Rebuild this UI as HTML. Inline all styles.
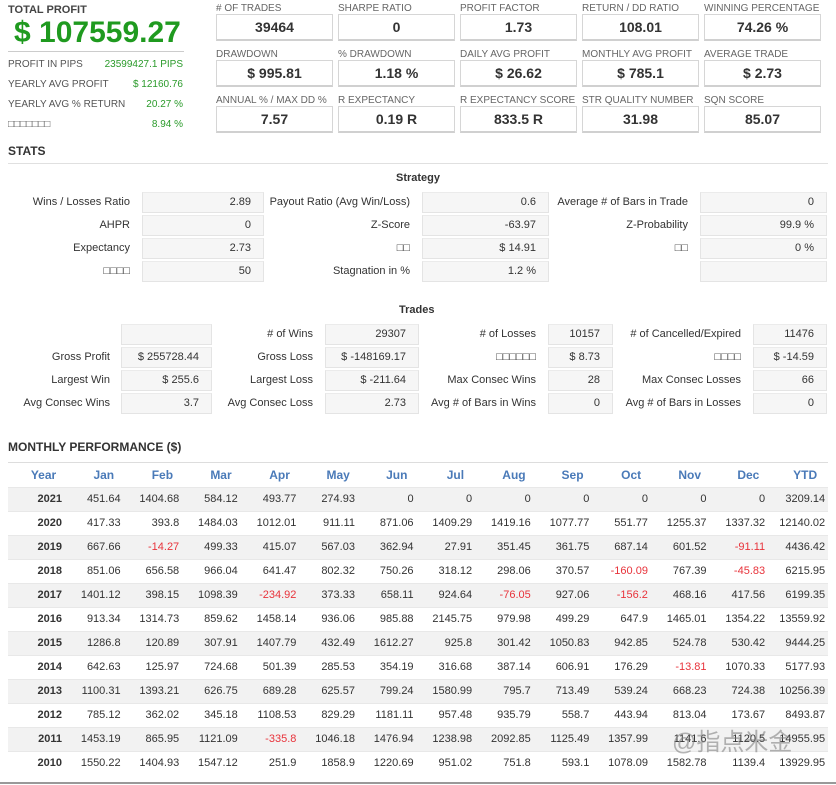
<!DOCTYPE html>
<html><head><meta charset="utf-8"><style>
*{margin:0;padding:0;box-sizing:border-box}
body{width:836px;height:785px;background:#fff;font-family:"Liberation Sans","Noto Sans CJK SC",sans-serif;color:#333;position:relative;overflow:hidden}
.a{position:absolute;white-space:nowrap}
.lbl{font-size:10px;color:#666}
.box{position:absolute;width:117px;height:27px;border:1px solid #d6d6d6;border-bottom:2px solid #d0d0d0;text-align:center;font-weight:bold;font-size:14px;line-height:25px;color:#333}
.sl{position:absolute;font-size:11px;text-align:right;white-space:nowrap;line-height:20px}
.sb{position:absolute;height:21px;background:#f6f6f6;border:1px solid #e4e4e4;border-top-color:#ebebeb;font-size:11px;text-align:right;padding-right:12px;line-height:19px}
.g{color:#2a9a2a}
table{position:absolute;left:8px;top:463px;border-collapse:collapse;table-layout:fixed;width:820px;font-size:11px}
th{color:#4a7ab8;font-weight:bold;font-size:12px;height:24px;text-align:center;padding-left:9px}
td{height:24px;text-align:right;padding-right:8px;border-top:1px solid #e8e8e8}
td:first-child{font-weight:bold}
td:last-child{padding-right:3px}
tbody tr:nth-child(odd){background:#f2f2f2}
.r{color:#e8333b}
</style></head><body>
<div class="a" style="left:8px;top:4px;font-size:11px;font-weight:bold;color:#444">TOTAL PROFIT</div>
<div class="a" style="left:14px;top:16px;font-size:30px;font-weight:bold;color:#1f9a1f">$ 107559.27</div>
<div class="a" style="left:8px;top:51px;width:176px;border-top:1px solid #ccc"></div>
<div class="a" style="left:8px;top:59px;font-size:10px;color:#555">PROFIT IN PIPS</div><div class="a g" style="right:653px;top:59px;font-size:10px">23599427.1 PIPS</div>
<div class="a" style="left:8px;top:79px;font-size:10px;color:#555">YEARLY AVG PROFIT</div><div class="a g" style="right:653px;top:79px;font-size:10px">$ 12160.76</div>
<div class="a" style="left:8px;top:99px;font-size:10px;color:#555">YEARLY AVG % RETURN</div><div class="a g" style="right:653px;top:99px;font-size:10px">20.27 %</div>
<div class="a" style="left:8px;top:119px;font-size:10px;color:#555">□□□□□□□</div><div class="a g" style="right:653px;top:119px;font-size:10px">8.94 %</div>

<div class="a lbl" style="left:216px;top:3px">#&nbsp;OF TRADES</div><div class="box" style="left:216px;top:14px">39464</div>
<div class="a lbl" style="left:338px;top:3px">SHARPE RATIO</div><div class="box" style="left:338px;top:14px">0</div>
<div class="a lbl" style="left:460px;top:3px">PROFIT FACTOR</div><div class="box" style="left:460px;top:14px">1.73</div>
<div class="a lbl" style="left:582px;top:3px">RETURN / DD RATIO</div><div class="box" style="left:582px;top:14px">108.01</div>
<div class="a lbl" style="left:704px;top:3px">WINNING PERCENTAGE</div><div class="box" style="left:704px;top:14px">74.26 %</div>
<div class="a lbl" style="left:216px;top:49px">DRAWDOWN</div><div class="box" style="left:216px;top:60px">$ 995.81</div>
<div class="a lbl" style="left:338px;top:49px">% DRAWDOWN</div><div class="box" style="left:338px;top:60px">1.18 %</div>
<div class="a lbl" style="left:460px;top:49px">DAILY AVG PROFIT</div><div class="box" style="left:460px;top:60px">$ 26.62</div>
<div class="a lbl" style="left:582px;top:49px">MONTHLY AVG PROFIT</div><div class="box" style="left:582px;top:60px">$ 785.1</div>
<div class="a lbl" style="left:704px;top:49px">AVERAGE TRADE</div><div class="box" style="left:704px;top:60px">$ 2.73</div>
<div class="a lbl" style="left:216px;top:95px">ANNUAL % / MAX DD %</div><div class="box" style="left:216px;top:106px">7.57</div>
<div class="a lbl" style="left:338px;top:95px">R EXPECTANCY</div><div class="box" style="left:338px;top:106px">0.19 R</div>
<div class="a lbl" style="left:460px;top:95px">R EXPECTANCY SCORE</div><div class="box" style="left:460px;top:106px">833.5 R</div>
<div class="a lbl" style="left:582px;top:95px">STR QUALITY NUMBER</div><div class="box" style="left:582px;top:106px">31.98</div>
<div class="a lbl" style="left:704px;top:95px">SQN SCORE</div><div class="box" style="left:704px;top:106px">85.07</div>

<div class="a" style="left:8px;top:144px;font-size:12px;font-weight:bold;color:#333">STATS</div>
<div class="a" style="left:8px;top:163px;width:820px;border-top:1px solid #e0e0e0"></div>
<div class="a" style="left:396px;top:172px;font-size:11px;font-weight:bold">Strategy</div>

<div class="sl" style="right:706px;top:192px">Wins / Losses Ratio</div><div class="sb" style="left:142px;top:192px;width:122px">2.89</div>
<div class="sl" style="right:426px;top:192px">Payout Ratio (Avg Win/Loss)</div><div class="sb" style="left:422px;top:192px;width:127px">0.6</div>
<div class="sl" style="right:148px;top:192px">Average # of Bars in Trade</div><div class="sb" style="left:700px;top:192px;width:127px">0</div>
<div class="sl" style="right:706px;top:215px">AHPR</div><div class="sb" style="left:142px;top:215px;width:122px">0</div>
<div class="sl" style="right:426px;top:215px">Z-Score</div><div class="sb" style="left:422px;top:215px;width:127px">-63.97</div>
<div class="sl" style="right:148px;top:215px">Z-Probability</div><div class="sb" style="left:700px;top:215px;width:127px">99.9 %</div>
<div class="sl" style="right:706px;top:238px">Expectancy</div><div class="sb" style="left:142px;top:238px;width:122px">2.73</div>
<div class="sl" style="right:426px;top:238px">□□</div><div class="sb" style="left:422px;top:238px;width:127px">$ 14.91</div>
<div class="sl" style="right:148px;top:238px">□□</div><div class="sb" style="left:700px;top:238px;width:127px">0 %</div>
<div class="sl" style="right:706px;top:261px">□□□□</div><div class="sb" style="left:142px;top:261px;width:122px">50</div>
<div class="sl" style="right:426px;top:261px">Stagnation in %</div><div class="sb" style="left:422px;top:261px;width:127px">1.2 %</div>
<div class="sb" style="left:700px;top:261px;width:127px"></div>

<div class="a" style="left:399px;top:304px;font-size:11px;font-weight:bold">Trades</div>
<div class="sb" style="left:121px;top:324px;width:91px"></div>
<div class="sl" style="right:523px;top:324px"># of Wins</div><div class="sb" style="left:325px;top:324px;width:94px">29307</div>
<div class="sl" style="right:300px;top:324px"># of Losses</div><div class="sb" style="left:548px;top:324px;width:65px">10157</div>
<div class="sl" style="right:95px;top:324px"># of Cancelled/Expired</div><div class="sb" style="left:753px;top:324px;width:74px">11476</div>
<div class="sl" style="right:726px;top:347px">Gross Profit</div><div class="sb" style="left:121px;top:347px;width:91px">$ 255728.44</div>
<div class="sl" style="right:523px;top:347px">Gross Loss</div><div class="sb" style="left:325px;top:347px;width:94px">$ -148169.17</div>
<div class="sl" style="right:300px;top:347px">□□□□□□</div><div class="sb" style="left:548px;top:347px;width:65px">$ 8.73</div>
<div class="sl" style="right:95px;top:347px">□□□□</div><div class="sb" style="left:753px;top:347px;width:74px">$ -14.59</div>
<div class="sl" style="right:726px;top:370px">Largest Win</div><div class="sb" style="left:121px;top:370px;width:91px">$ 255.6</div>
<div class="sl" style="right:523px;top:370px">Largest Loss</div><div class="sb" style="left:325px;top:370px;width:94px">$ -211.64</div>
<div class="sl" style="right:300px;top:370px">Max Consec Wins</div><div class="sb" style="left:548px;top:370px;width:65px">28</div>
<div class="sl" style="right:95px;top:370px">Max Consec Losses</div><div class="sb" style="left:753px;top:370px;width:74px">66</div>
<div class="sl" style="right:726px;top:393px">Avg Consec Wins</div><div class="sb" style="left:121px;top:393px;width:91px">3.7</div>
<div class="sl" style="right:523px;top:393px">Avg Consec Loss</div><div class="sb" style="left:325px;top:393px;width:94px">2.73</div>
<div class="sl" style="right:300px;top:393px">Avg # of Bars in Wins</div><div class="sb" style="left:548px;top:393px;width:65px">0</div>
<div class="sl" style="right:95px;top:393px">Avg # of Bars in Losses</div><div class="sb" style="left:753px;top:393px;width:74px">0</div>

<div class="a" style="left:8px;top:440px;font-size:12px;font-weight:bold;color:#333">MONTHLY PERFORMANCE ($)</div>
<div class="a" style="left:8px;top:462px;width:820px;border-top:1px solid #ddd"></div>
<table>
<colgroup><col style="width:62px"><col style="width:58.6px"><col style="width:58.6px"><col style="width:58.6px"><col style="width:58.6px"><col style="width:58.6px"><col style="width:58.6px"><col style="width:58.6px"><col style="width:58.6px"><col style="width:58.6px"><col style="width:58.6px"><col style="width:58.6px"><col style="width:58.6px"><col style="width:55px"></colgroup>
<thead><tr><th>Year</th><th>Jan</th><th>Feb</th><th>Mar</th><th>Apr</th><th>May</th><th>Jun</th><th>Jul</th><th>Aug</th><th>Sep</th><th>Oct</th><th>Nov</th><th>Dec</th><th>YTD</th></tr></thead>
<tbody>
<tr><td>2021</td><td>451.64</td><td>1404.68</td><td>584.12</td><td>493.77</td><td>274.93</td><td>0</td><td>0</td><td>0</td><td>0</td><td>0</td><td>0</td><td>0</td><td>3209.14</td></tr>
<tr><td>2020</td><td>417.33</td><td>393.8</td><td>1484.03</td><td>1012.01</td><td>911.11</td><td>871.06</td><td>1409.29</td><td>1419.16</td><td>1077.77</td><td>551.77</td><td>1255.37</td><td>1337.32</td><td>12140.02</td></tr>
<tr><td>2019</td><td>667.66</td><td class="r">-14.27</td><td>499.33</td><td>415.07</td><td>567.03</td><td>362.94</td><td>27.91</td><td>351.45</td><td>361.75</td><td>687.14</td><td>601.52</td><td class="r">-91.11</td><td>4436.42</td></tr>
<tr><td>2018</td><td>851.06</td><td>656.58</td><td>966.04</td><td>641.47</td><td>802.32</td><td>750.26</td><td>318.12</td><td>298.06</td><td>370.57</td><td class="r">-160.09</td><td>767.39</td><td class="r">-45.83</td><td>6215.95</td></tr>
<tr><td>2017</td><td>1401.12</td><td>398.15</td><td>1098.39</td><td class="r">-234.92</td><td>373.33</td><td>658.11</td><td>924.64</td><td class="r">-76.05</td><td>927.06</td><td class="r">-156.2</td><td>468.16</td><td>417.56</td><td>6199.35</td></tr>
<tr><td>2016</td><td>913.34</td><td>1314.73</td><td>859.62</td><td>1458.14</td><td>936.06</td><td>985.88</td><td>2145.75</td><td>979.98</td><td>499.29</td><td>647.9</td><td>1465.01</td><td>1354.22</td><td>13559.92</td></tr>
<tr><td>2015</td><td>1286.8</td><td>120.89</td><td>307.91</td><td>1407.79</td><td>432.49</td><td>1612.27</td><td>925.8</td><td>301.42</td><td>1050.83</td><td>942.85</td><td>524.78</td><td>530.42</td><td>9444.25</td></tr>
<tr><td>2014</td><td>642.63</td><td>125.97</td><td>724.68</td><td>501.39</td><td>285.53</td><td>354.19</td><td>316.68</td><td>387.14</td><td>606.91</td><td>176.29</td><td class="r">-13.81</td><td>1070.33</td><td>5177.93</td></tr>
<tr><td>2013</td><td>1100.31</td><td>1393.21</td><td>626.75</td><td>689.28</td><td>625.57</td><td>799.24</td><td>1580.99</td><td>795.7</td><td>713.49</td><td>539.24</td><td>668.23</td><td>724.38</td><td>10256.39</td></tr>
<tr><td>2012</td><td>785.12</td><td>362.02</td><td>345.18</td><td>1108.53</td><td>829.29</td><td>1181.11</td><td>957.48</td><td>935.79</td><td>558.7</td><td>443.94</td><td>813.04</td><td>173.67</td><td>8493.87</td></tr>
<tr><td>2011</td><td>1453.19</td><td>865.95</td><td>1121.09</td><td class="r">-335.8</td><td>1046.18</td><td>1476.94</td><td>1238.98</td><td>2092.85</td><td>1125.49</td><td>1357.99</td><td>1141.6</td><td>1120.5</td><td>14955.95</td></tr>
<tr><td>2010</td><td>1550.22</td><td>1404.93</td><td>1547.12</td><td>251.9</td><td>1858.9</td><td>1220.69</td><td>951.02</td><td>751.8</td><td>593.1</td><td>1078.09</td><td>1582.78</td><td>1139.4</td><td>13929.95</td></tr>
</tbody></table>
<div class="a" style="left:672px;top:722px;font-size:24px;color:rgba(120,120,120,0.55)">@指点米金</div>
<div class="a" style="left:0;top:782px;width:836px;border-top:2px solid #999"></div>
</body></html>
